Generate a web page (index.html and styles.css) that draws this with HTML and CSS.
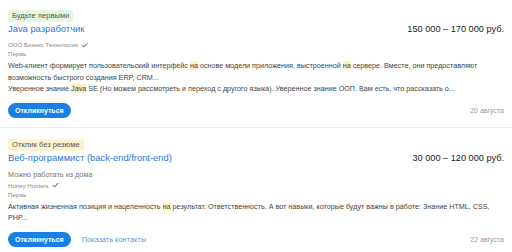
FILE: index.html
```html
<!DOCTYPE html>
<html lang="ru">
<head>
    <meta charset="UTF-8">
    <title>Вакансии</title>
    <link rel="stylesheet" href="styles.css">
</head>
<body>
    <div class="vacancy">
        <span class="badge badge-green">Будьте первыми</span>
        <div class="head">
            <a class="title" href="#">Java разработчик</a>
            <span class="salary">150 000 – 170 000 руб.</span>
        </div>
        <div class="meta">ООО Бизнес Технологии <svg class="check" viewBox="0 0 10 8"><path d="M1 4.2 L3.8 7 L9 1"/></svg></div>
        <div class="meta">Пермь</div>
        <div class="desc">
            <p>Web-клиент формирует пользовательский интерфейс <mark>на</mark> основе модели приложения, выстроенной <mark>на</mark> сервере. Вместе, они предоставляют возможность быстрого создания ERP, CRM...</p>
            <p>Уверенное знание <mark>Java</mark> SE (Но можем рассмотреть и переход с другого языка). Уверенное знание ООП. Вам есть, что рассказать о...</p>
        </div>
        <div class="foot">
            <button class="btn">Откликнуться</button>
            <span class="date">20 августа</span>
        </div>
    </div>

    <div class="vacancy">
        <span class="badge badge-yellow">Отклик без резюме</span>
        <div class="head">
            <a class="title" href="#">Веб-программист (back-end/front-end)</a>
            <span class="salary">30 000 – 120 000 руб.</span>
        </div>
        <div class="remote">Можно работать из дома</div>
        <div class="meta">Honey Hunters <svg class="check" viewBox="0 0 10 8"><path d="M1 4.2 L3.8 7 L9 1"/></svg></div>
        <div class="meta">Пермь</div>
        <div class="desc">
            <p>Активная жизненная позиция и нацеленность <mark>на</mark> результат. Ответственность. А вот навыки, которые будут важны в работе: Знание HTML, CSS, PHP...</p>
        </div>
        <div class="foot">
            <button class="btn">Откликнуться</button>
            <a class="contacts" href="#">Показать контакты</a>
            <span class="date">22 августа</span>
        </div>
    </div>
</body>
</html>
```

FILE: styles.css
```css
body {
    font-family: 'Liberation Sans', Arial, sans-serif;
    margin: 0;
    padding: 0;
    background-color: #fff;
    color: #333;
}

.vacancy {
    padding: 11px 8px 9px;
    border-bottom: 1px solid #ececec;
}

.vacancy:first-child {
    padding-top: 10px;
}

.badge {
    display: block;
    width: fit-content;
    font-size: 7.6px;
    line-height: 12px;
    padding: 0 4px;
    border-radius: 2px;
    color: #555;
}

.badge-green {
    background-color: #e6f7df;
}

.badge-yellow {
    background-color: #fdf3cd;
}

.head {
    display: flex;
    justify-content: space-between;
    align-items: baseline;
    margin-top: 1px;
    line-height: 12px;
}

.title {
    font-size: 9.4px;
    color: #2a78e0;
    text-decoration: none;
}

.salary {
    font-size: 9.2px;
    color: #222;
}

.remote {
    font-size: 7.3px;
    line-height: 10px;
    color: #777;
    margin-top: 6px;
}

.meta {
    font-size: 6.1px;
    color: #888;
    line-height: 9px;
    height: 9px;
    display: flex;
    align-items: center;
}

.head + .meta {
    margin-top: 5px;
}

.remote + .meta {
    margin-top: 1px;
}

.check {
    width: 7px;
    height: 6px;
    margin-left: 3px;
    fill: none;
    stroke: #444;
    stroke-width: 1.3;
}

.desc {
    font-size: 7.2px;
    line-height: 11.5px;
    color: #444;
    margin-top: 2px;
}

.desc p {
    margin: 0;
}

mark {
    background-color: #fdf0c2;
    color: inherit;
}

.foot {
    display: flex;
    align-items: center;
    margin-top: 8px;
}

.btn {
    font-family: inherit;
    font-size: 7px;
    font-weight: bold;
    color: #fff;
    background-color: #1b80e4;
    border: none;
    border-radius: 8px;
    height: 15px;
    padding: 0 7px;
    cursor: pointer;
}

.contacts {
    font-size: 7.4px;
    color: #5a96e0;
    text-decoration: none;
    margin-left: 11px;
}

.date {
    margin-left: auto;
    font-size: 7px;
    color: #999;
}
```
